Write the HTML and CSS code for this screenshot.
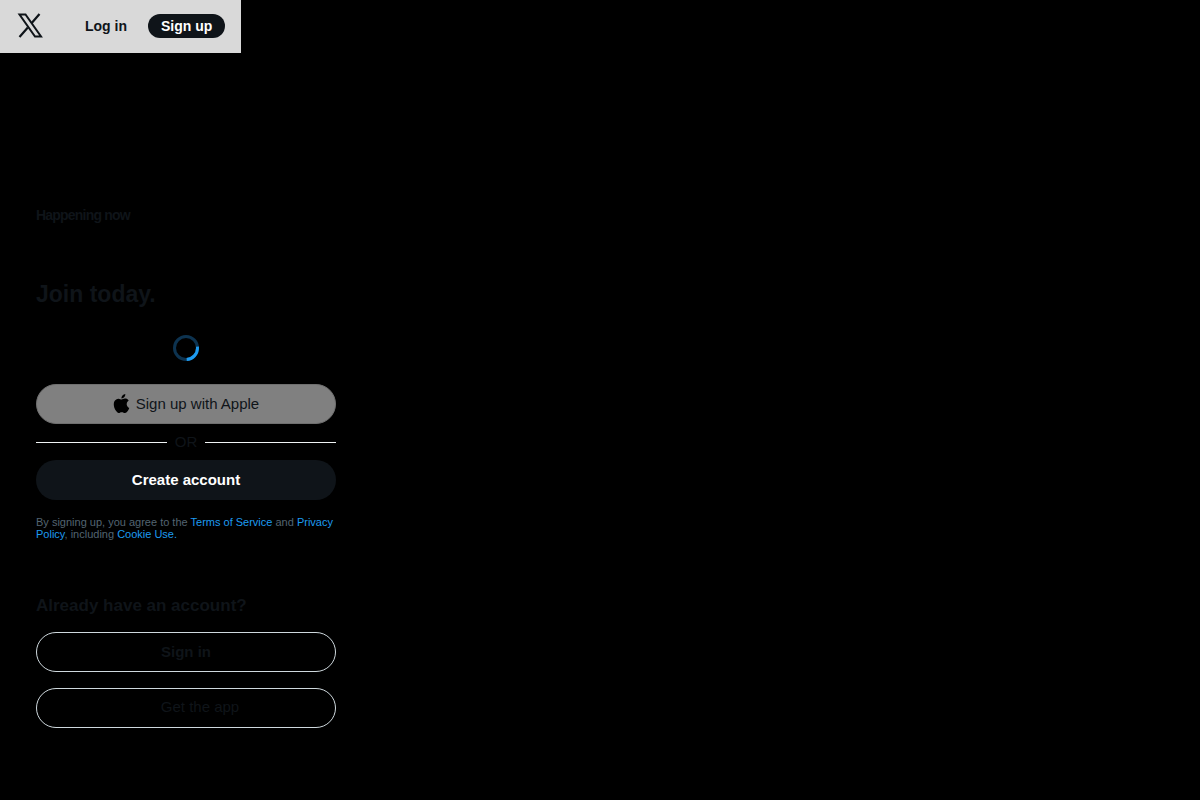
FILE: index.html
```html
<!DOCTYPE html>
<html lang="en">
<head>
  <meta charset="UTF-8" />
  <title>X. It's what's happening</title>
  <link rel="stylesheet" href="styles.css">
</head>
<body>
  <header class="topbar">
    <svg class="logo" viewBox="0 0 26 26" width="26" height="26">
      <path class="logo-band" d="M2.5 1.5h6L24 23.5h-6z"/>
      <path class="logo-thin" d="M22.5 1l-8.2 9.5M10.8 14.5L2.5 24"/>
    </svg>
    <a class="login" href="#">Log in</a>
    <a class="signup" href="#">Sign up</a>
  </header>

  <main class="content">
    <h1 class="happening">Happening now</h1>
    <h2 class="join">Join today.</h2>

    <div class="spinner">
      <svg viewBox="0 0 26 26" width="26" height="26">
        <circle class="track" cx="13" cy="13" r="11.5"/>
        <circle class="arc" cx="13" cy="13" r="11.5" pathLength="100" stroke-dasharray="26 74" stroke-dashoffset="2"/>
      </svg>
    </div>

    <a class="btn btn-apple" href="#">
      <svg class="apple" viewBox="0 0 24 24"><path d="M12.152 6.896c-.948 0-2.415-1.078-3.96-1.04-2.04.027-3.91 1.183-4.961 3.014-2.117 3.675-.546 9.103 1.519 12.09 1.013 1.454 2.208 3.09 3.792 3.039 1.52-.065 2.09-.987 3.935-.987 1.831 0 2.35.987 3.96.948 1.637-.026 2.676-1.48 3.676-2.948 1.156-1.688 1.636-3.325 1.662-3.415-.039-.013-3.182-1.221-3.22-4.857-.026-3.04 2.48-4.494 2.597-4.559-1.429-2.09-3.623-2.324-4.39-2.376-2-.156-3.675 1.09-4.61 1.09zM15.53 3.83c.843-1.012 1.4-2.427 1.245-3.83-1.207.052-2.662.805-3.532 1.818-.78.896-1.454 2.338-1.273 3.714 1.338.104 2.715-.688 3.559-1.701"/></svg>
      Sign up with Apple
    </a>

    <div class="divider"><span>OR</span></div>

    <a class="btn btn-create" href="#">Create account</a>

    <p class="legal">By signing up, you agree to the <a href="#">Terms of Service</a> and <a href="#">Privacy Policy</a>, including <a href="#">Cookie Use.</a></p>

    <h3 class="already">Already have an account?</h3>
    <a class="btn btn-outline btn-signin" href="#">Sign in</a>
    <a class="btn btn-outline btn-app" href="#">Get the app</a>
  </main>
</body>
</html>
```

FILE: styles.css
```css
* {
  margin: 0;
  padding: 0;
  box-sizing: border-box;
  font-family: 'Liberation Sans', Arial, sans-serif;
}

body {
  background: #000;
  color: #0f1419;
  min-height: 100vh;
}

a {
  text-decoration: none;
  color: inherit;
}

.topbar {
  width: 241px;
  height: 53px;
  background: #d9d9d9;
  display: flex;
  align-items: center;
  padding: 0 0 1px 17px;
}

.logo {
  flex: none;
}

.logo-band,
.logo-thin {
  fill: none;
  stroke: #0f1419;
}

.logo-band {
  stroke-width: 2;
}

.logo-thin {
  stroke-width: 2.2;
}

.login {
  margin-left: 42px;
  font-size: 14px;
  font-weight: 700;
}

.signup {
  margin-left: 21px;
  height: 24px;
  padding: 0 13px;
  border-radius: 12px;
  background: #0f1419;
  color: #fff;
  font-size: 14px;
  font-weight: 700;
  line-height: 24px;
}

.content {
  width: 300px;
  margin-left: 36px;
  display: flex;
  flex-direction: column;
}

.happening {
  margin-top: 154px;
  font-size: 14px;
  line-height: 16px;
  font-weight: 700;
  letter-spacing: -0.8px;
}

.join {
  margin-top: 56px;
  font-size: 23px;
  line-height: 30px;
  font-weight: 700;
}

.spinner {
  margin-top: 26px;
  height: 26px;
  display: flex;
  justify-content: center;
}

.track,
.arc {
  fill: none;
  stroke-width: 3;
}

.track {
  stroke: #0d3350;
}

.arc {
  stroke: #1d9bf0;
}

.btn {
  height: 40px;
  border-radius: 20px;
  display: flex;
  align-items: center;
  justify-content: center;
  font-size: 15px;
  padding-bottom: 1px;
}

.btn-apple {
  margin-top: 23px;
  gap: 5px;
  background: #808080;
  border: 1px solid #6f6f6f;
  padding: 0 1px 2px 0;
}

.apple {
  width: 19px;
  height: 19px;
  fill: #000;
}

.divider {
  margin: 8px 0;
  height: 20px;
  display: flex;
  align-items: center;
  gap: 8px;
  font-size: 15px;
}

.divider span {
  margin-top: -1px;
}

.divider::before,
.divider::after {
  content: "";
  flex: 1;
  height: 1px;
  background: #eff3f4;
}

.btn-create {
  background: #0f1419;
  color: #fff;
  font-weight: 700;
  padding-bottom: 2px;
}

.legal {
  margin-top: 16px;
  font-size: 11px;
  line-height: 12px;
  color: #536471;
}

.legal a {
  color: #1d9bf0;
}

.already {
  margin-top: 56px;
  font-size: 17px;
  line-height: 20px;
  font-weight: 700;
}

.btn-outline {
  border: 1px solid #cfd9de;
}

.btn-signin {
  margin-top: 16px;
  font-weight: 700;
  padding-bottom: 2px;
}

.btn-app {
  margin-top: 16px;
  padding: 0 0 3px 28px;
}
```
